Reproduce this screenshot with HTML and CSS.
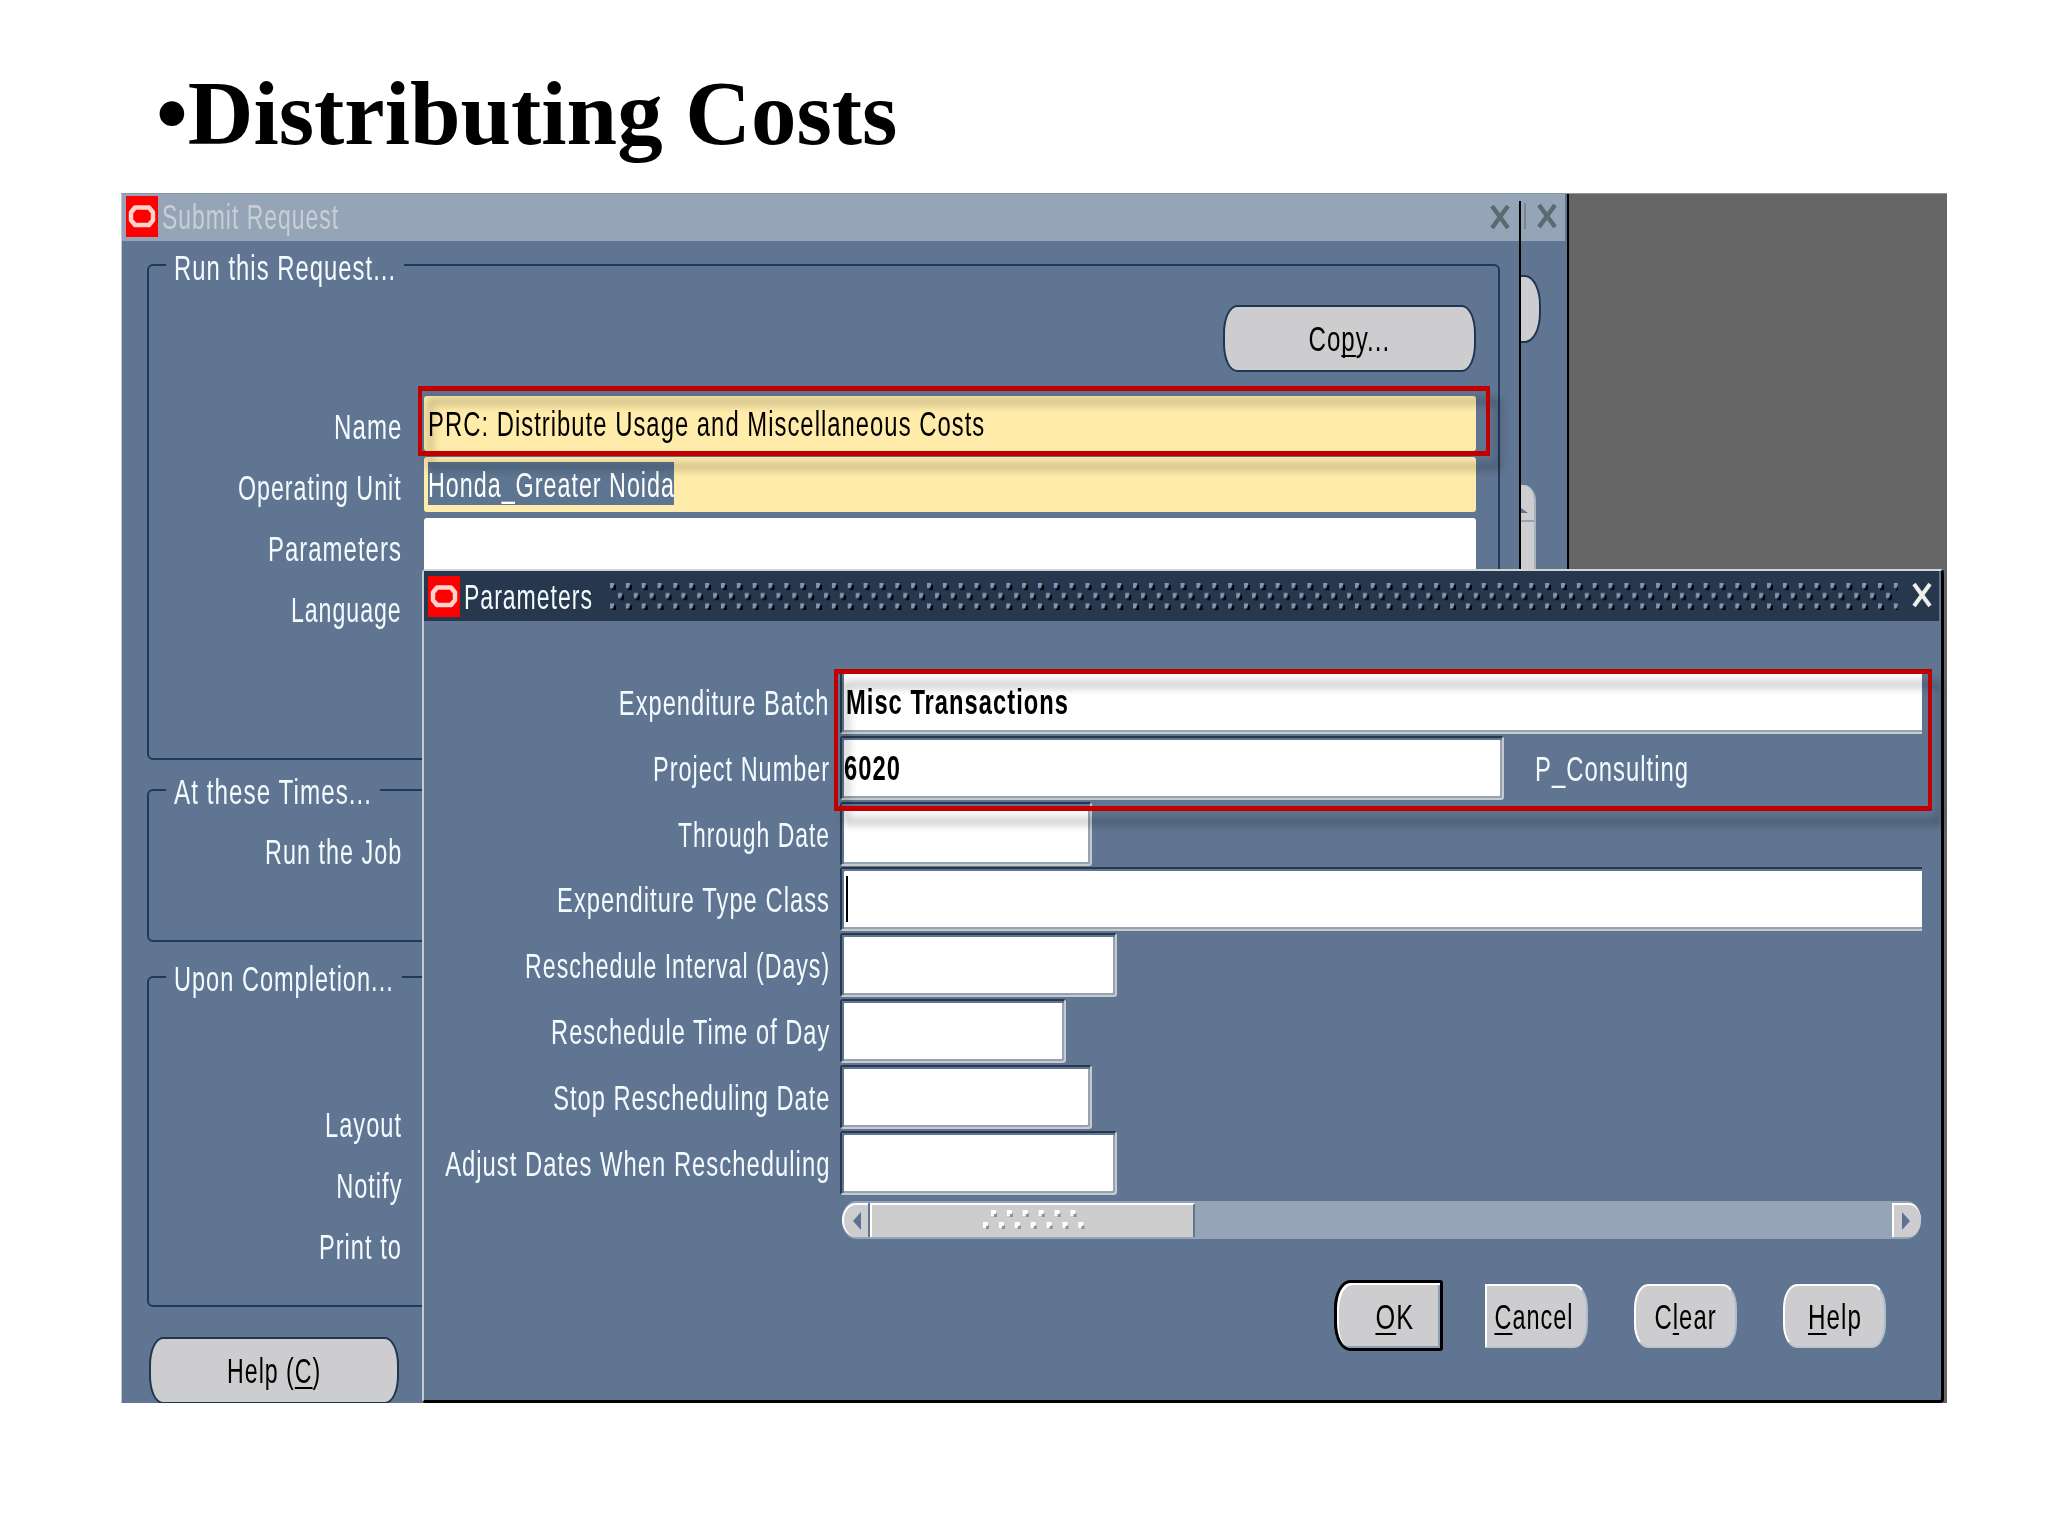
FILE: index.html
```html
<!DOCTYPE html>
<html lang="en">
<head>
    <meta charset="UTF-8" />
    <title>Distributing Costs</title>
    <link rel="stylesheet" href="styles.css">
</head>
<body>
    <h1><span class="t" data-w="741">•Distributing Costs</span></h1>

    <div class="desktop">
        <!-- window at the back, mostly covered -->
        <div class="window back">
            <div class="titlebar">
                <span class="bar-mark"></span>
                <svg class="close" width="20" height="26" viewBox="0 0 20 26"><path d="M2 2L18 24M18 2L2 24" /></svg>
            </div>
            <div class="back-button"></div>
            <div class="back-scroll">
                <div class="back-up"><svg width="14" height="10"><path d="M0 0L14 10H0Z" fill="#607591" /></svg></div>
            </div>
        </div>

        <div class="window submit">
            <div class="titlebar">
                <svg class="logo" width="32" height="41" viewBox="0 0 32 41"><rect width="32" height="41" fill="#ff0000" /><path d="M9 11.5H23L27 16.5V24L23 29H9L5 24V16.5Z" fill="none" stroke="#ffd3cd" stroke-width="4.5" stroke-linejoin="round" /></svg>
                <span class="title"><span class="t" data-w="177">Submit Request</span></span>
                <svg class="close" width="20" height="26" viewBox="0 0 20 26"><path d="M2 2L18 24M18 2L2 24" /></svg>
            </div>
            <div class="content">
                <div class="group run">
                    <div class="legend"><span class="t" data-w="222">Run this Request...</span></div>
                    <button class="round copy"><span class="t mid" data-w="82">Co<u>p</u>y...</span></button>
                    <div class="row">
                        <label><span class="t right" data-w="68">Name</span></label>
                        <div class="input required"><span class="t" data-w="557">PRC: Distribute Usage and Miscellaneous Costs</span></div>
                    </div>
                    <div class="row">
                        <label><span class="t right" data-w="164">Operating Unit</span></label>
                        <div class="input required"><span class="selected"><span class="t" data-w="247">Honda_Greater Noida</span></span></div>
                    </div>
                    <div class="row">
                        <label><span class="t right" data-w="134">Parameters</span></label>
                        <div class="input"></div>
                    </div>
                    <div class="row">
                        <label><span class="t right" data-w="111">Language</span></label>
                    </div>
                </div>
                <div class="group times">
                    <div class="legend"><span class="t" data-w="198">At these Times...</span></div>
                    <div class="row"><label><span class="t right" data-w="137">Run the Job</span></label></div>
                </div>
                <div class="group completion">
                    <div class="legend"><span class="t" data-w="220">Upon Completion...</span></div>
                    <div class="row"><label><span class="t right" data-w="77">Layout</span></label></div>
                    <div class="row"><label><span class="t right" data-w="66">Notify</span></label></div>
                    <div class="row"><label><span class="t right" data-w="83">Print to</span></label></div>
                </div>
                <button class="round help"><span class="t mid" data-w="94">Help (<u>C</u>)</span></button>
            </div>
            <div class="highlight name-highlight"></div>
        </div>

        <div class="window params">
            <div class="titlebar">
                <svg class="logo" width="32" height="41" viewBox="0 0 32 41"><rect width="32" height="41" fill="#ff0000" /><path d="M9 11.5H23L27 16.5V24L23 29H9L5 24V16.5Z" fill="none" stroke="#ffd3cd" stroke-width="4.5" stroke-linejoin="round" /></svg>
                <span class="title"><span class="t" data-w="129">Parameters</span></span>
                <svg class="grip" width="1288" height="27">
                    <defs>
                        <pattern id="dots" width="15.85" height="20.4" patternUnits="userSpaceOnUse">
                            <path d="M4 2h2v5h-4v-2h2z M12 12h2v5h-4v-2h2z" fill="#000" />
                            <path d="M0 0h4v3h-1v2h-3z M8 10h4v3h-1v2h-3z" fill="#8496ae" />
                        </pattern>
                    </defs>
                    <rect width="1288" height="27" fill="url(#dots)" />
                </svg>
                <svg class="close" width="20" height="26" viewBox="0 0 20 26"><path d="M2 2L18 24M18 2L2 24" /></svg>
            </div>
            <div class="form">
                <div class="prow">
                    <label><span class="t right" data-w="211">Expenditure Batch</span></label>
                    <div class="field full"><span class="t bold" data-w="223">Misc Transactions</span></div>
                </div>
                <div class="prow">
                    <label><span class="t right" data-w="177">Project Number</span></label>
                    <div class="field w-project"><span class="t bold num" data-w="57">6020</span></div>
                    <span class="desc"><span class="t" data-w="154">P_Consulting</span></span>
                </div>
                <div class="prow">
                    <label><span class="t right" data-w="152">Through Date</span></label>
                    <div class="field w-date"></div>
                </div>
                <div class="prow">
                    <label><span class="t right" data-w="273">Expenditure Type Class</span></label>
                    <div class="field full"><span class="caret"></span></div>
                </div>
                <div class="prow">
                    <label><span class="t right" data-w="305">Reschedule Interval (Days)</span></label>
                    <div class="field w-days"></div>
                </div>
                <div class="prow">
                    <label><span class="t right" data-w="279">Reschedule Time of Day</span></label>
                    <div class="field w-time"></div>
                </div>
                <div class="prow">
                    <label><span class="t right" data-w="277">Stop Rescheduling Date</span></label>
                    <div class="field w-date"></div>
                </div>
                <div class="prow">
                    <label><span class="t right" data-w="385">Adjust Dates When Rescheduling</span></label>
                    <div class="field w-days"></div>
                </div>
                <div class="scrollbar">
                    <div class="sb-left"><svg width="8" height="18"><path d="M8 0V18L0 9Z" fill="#5b7294" /></svg></div>
                    <div class="thumb">
                        <svg width="104" height="22">
                            <defs>
                                <pattern id="tdots" width="15.9" height="22" patternUnits="userSpaceOnUse">
                                    <path d="M10 3h4v4h-3z M2 15h4v4h-3z" fill="#8b9097" />
                                    <path d="M8 0h5v4h-2v2h-3z M0 12h5v4h-2v2h-3z" fill="#fff" />
                                </pattern>
                            </defs>
                            <path d="M0 12H103V22H0Z M7 0H95V12H7Z" fill="url(#tdots)" />
                        </svg>
                    </div>
                    <div class="sb-right"><svg width="8" height="18"><path d="M0 0V18L8 9Z" fill="#5b7294" /></svg></div>
                </div>
                <div class="actions">
                    <button class="btn ok"><span class="t mid" data-w="39"><u>O</u>K</span></button>
                    <button class="btn cancel"><span class="t mid" data-w="79"><u>C</u>ancel</span></button>
                    <button class="btn"><span class="t mid" data-w="62">C<u>l</u>ear</span></button>
                    <button class="btn"><span class="t mid" data-w="54"><u>H</u>elp</span></button>
                </div>
            </div>
            <div class="highlight batch-highlight"></div>
        </div>
    </div>

    <script>
        document.querySelectorAll(".t").forEach(el => {
            el.style.transform = `scaleX(${el.dataset.w / el.offsetWidth})`;
        });
    </script>
</body>
</html>
```
FILE: styles.css
```css
* {
    box-sizing: border-box;
}

body {
    margin: 0;
    width: 2048px;
    height: 1536px;
    overflow: hidden;
    background: #fff;
    font-family: "Liberation Sans", Arial, sans-serif;
    font-size: 35px;
    color: #f4fbff;
}

h1 {
    margin: 0;
    height: 193px;
    padding: 61px 0 0 156px;
    font-family: "Liberation Serif", "Times New Roman", serif;
    font-size: 92px;
    line-height: 104px;
    color: #000;
}

.t {
    display: inline-block;
    white-space: nowrap;
    transform-origin: left center;
}

.desktop .t {
    letter-spacing: 1.5px;
}

.t.right {
    transform-origin: right center;
}

.t.mid {
    transform-origin: center;
}

u {
    text-decoration-thickness: 2px;
    text-underline-offset: 4px;
    text-decoration-skip-ink: none;
}

.desktop {
    position: relative;
    width: 1826px;
    height: 1210px;
    margin-left: 121px;
    overflow: hidden;
    background: #666;
    border-left: 1px solid #c3cad1;
    border-top: 1px solid #8c969d;
}

.window {
    position: absolute;
    background: #607591;
}

.titlebar {
    display: flex;
    align-items: flex-start;
    height: 47px;
    background: #95a5b7;
}

.close {
    margin-left: auto;
    fill: none;
    stroke: #5b6a6e;
    stroke-width: 4.5;
}

.logo {
    flex: none;
}

/* back window */
.back {
    left: 1399px;
    top: 0;
    width: 48px;
    height: 500px;
    border-right: 2px solid #000;
}

.back .titlebar {
    width: 44px;
    padding: 9px 8px 0 3px;
}

.bar-mark {
    width: 2px;
    height: 26px;
    background: #7b858e;
}

.back-button {
    width: 20px;
    height: 68px;
    margin-top: 34px;
    background: #cdcdcf;
    border: 2px solid #1f3653;
    border-left: 0;
    border-radius: 0 16px 16px 0 / 0 30px 30px 0;
}

.back-scroll {
    width: 15px;
    height: 120px;
    margin-top: 142px;
    background: #cdcdcf;
    border-right: 2px solid #a5b2c0;
    border-radius: 0 12px 0 0 / 0 16px 0 0;
}

.back-up {
    height: 37px;
    padding-top: 16px;
    margin-left: -7px;
    border-bottom: 2px solid #93a3b5;
    line-height: 0;
}

/* submit request */
.submit {
    left: 0;
    top: 0;
    width: 1399px;
    height: 1210px;
}

.submit::after {
    content: "";
    position: absolute;
    right: 0;
    top: 7px;
    bottom: 0;
    width: 2px;
    background: #000;
}

.submit .titlebar {
    padding: 2px 11px 0 4px;
}

.submit .close {
    margin-top: 8px;
}

.submit .title {
    margin-left: 4px;
    line-height: 41px;
    color: #c9ced4;
}

.content {
    padding: 23px 0 0 25px;
}

.group {
    width: 1353px;
    border: 2px solid #1f3a5a;
    border-radius: 6px;
}

.run {
    height: 496px;
}

.times {
    height: 153px;
    margin-top: 29px;
}

.completion {
    height: 331px;
    margin-top: 34px;
}

.legend {
    width: 238px;
    height: 36px;
    margin: -16px 0 0 17px;
    padding-left: 8px;
    background: #607591;
    line-height: 36px;
}

.times .legend {
    width: 214px;
    margin-top: -17px;
    margin-bottom: 11px;
}

.completion .legend {
    width: 236px;
    margin-top: -17px;
    margin-bottom: 97px;
}

.round {
    display: flex;
    align-items: center;
    justify-content: center;
    width: 253px;
    height: 67px;
    padding: 0;
    background: #cdcdcf;
    border: 2px solid #1f3653;
    border-radius: 14px / 28px;
    font: inherit;
    color: #000;
}

.copy {
    margin: 19px 22px 24px auto;
}

.help {
    width: 250px;
    margin: 30px 0 0 2px;
}

.row {
    display: flex;
    height: 61px;
}

.row label {
    width: 253px;
    text-align: right;
    line-height: 61px;
    white-space: nowrap;
    display: flex;
    justify-content: flex-end;
}

.input {
    width: 1052px;
    height: 55px;
    margin-left: 22px;
    padding-left: 4px;
    line-height: 55px;
    background: #fff;
    border-radius: 3px;
    color: #f4fbff;
}

.required {
    background: #ffecaa;
    color: #000;
}

.selected {
    display: block;
    width: 246px;
    height: 43px;
    margin-top: 5px;
    background: #5d7591;
    color: #fff;
    line-height: 45px;
}

/* red callout frames drawn over the forms */
.highlight {
    position: absolute;
    border: 5px solid #c00000;
    border-left-width: 4px;
    border-right-width: 4px;
    filter: drop-shadow(10px 13px 4px rgba(0, 0, 0, 0.3));
}

.name-highlight {
    left: 296px;
    top: 192px;
    width: 1072px;
    height: 70px;
}

.batch-highlight {
    left: 410px;
    top: 98px;
    width: 1098px;
    height: 142px;
}

/* parameters dialog */
.params {
    left: 300px;
    top: 375px;
    width: 1522px;
    height: 834px;
    border: 2px solid #000;
    border-top-color: #d2d4d3;
    border-left-color: #c6c9cf;
    border-right-width: 3px;
    border-bottom-width: 3px;
    border-radius: 4px;
}

.params .titlebar {
    width: 1515px;
    height: 50px;
    padding: 5px 7px 0 4px;
    background: #27384e;
}

.params .title {
    width: 126px;
    margin-left: 4px;
    line-height: 42px;
}

.grip {
    margin: 7px 0 0 20px;
}

.params .close {
    margin-top: 6px;
    stroke: #eef0ea;
    stroke-width: 4;
}

.form {
    padding-top: 49px;
}

.prow {
    display: flex;
    height: 65.8px;
}

.prow label {
    display: flex;
    justify-content: flex-end;
    width: 406px;
    margin-right: 10px;
    line-height: 65.8px;
    white-space: nowrap;
}

.field {
    display: flex;
    align-items: center;
    height: 64px;
    padding-left: 4px;
    background: #fff;
    border: 2px solid #c8c9ca;
    border-top-color: #26384f;
    border-left-color: #26384f;
    border-radius: 3px;
    box-shadow: inset 2px 2px #607591, inset -2px -2px #93a3b5;
    color: #000;
}

.full {
    width: 1082px;
    border-right: 0;
    border-radius: 3px 0 0 3px;
    box-shadow: inset 2px 2px #607591, inset 0 -2px #93a3b5;
}

.w-project {
    width: 664px;
}

.w-date {
    width: 252px;
}

.w-days {
    width: 277px;
}

.w-time {
    width: 226px;
}

.bold {
    font-weight: bold;
}

.num {
    margin-left: -2px;
}

.caret {
    width: 2px;
    height: 46px;
    background: #000;
}

.desc {
    margin-left: 31px;
    line-height: 65.8px;
}

.scrollbar {
    display: flex;
    width: 1079px;
    height: 38px;
    margin: 5px 0 0 418px;
    padding: 2px 0;
    background: #95a5b7;
    border-radius: 14px 14px 14px 14px / 19px;
}

.sb-left,
.sb-right {
    display: flex;
    align-items: center;
    background: #cdcdcf;
}

.sb-left {
    width: 28px;
    padding-left: 9px;
    border-left: 2px solid #fff;
    border-top: 2px solid #fff;
    border-radius: 14px 0 0 14px / 17px 0 0 17px;
}

.sb-right {
    width: 29px;
    margin-left: auto;
    padding-left: 8px;
    border-left: 2px solid #fff;
    border-top: 2px solid #fff;
    border-radius: 0 12px 12px 0 / 0 17px 17px 0;
}

.thumb {
    display: flex;
    align-items: center;
    justify-content: center;
    width: 325px;
    padding-left: 4px;
    background: #cdcdcd;
    border: 2px solid #fff;
    border-bottom: 0;
    border-right-color: #607591;
    box-shadow: -2px 0 #607591;
}

.actions {
    display: flex;
    align-items: center;
    justify-content: flex-end;
    gap: 46px;
    margin-top: 41px;
    padding-right: 55px;
}

.btn {
    display: flex;
    align-items: center;
    justify-content: center;
    width: 103px;
    height: 64px;
    padding: 3px 0 0;
    background: #cdcdcf;
    border: 2px solid #fff;
    border-right-color: #aebccb;
    border-bottom-color: #bcc6cf;
    border-radius: 14px / 24px;
    font: inherit;
    color: #000;
}

.cancel {
    padding-right: 6px;
    border-radius: 0 14px 14px 0 / 0 24px 24px 0;
}

.ok {
    width: 109px;
    height: 71px;
    margin-right: -4px;
    padding-left: 12px;
    border: 3px solid #000;
    border-radius: 16px 3px 3px 16px / 28px 3px 3px 28px;
    box-shadow: inset 2px 2px #fff, inset -2px -2px #8fa0b5;
}
```
